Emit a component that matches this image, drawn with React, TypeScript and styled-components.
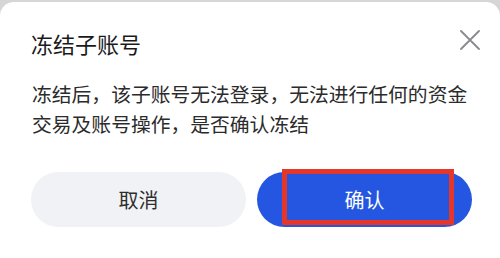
import React from "react";
import styled, { createGlobalStyle } from "styled-components";

const GlobalStyle = createGlobalStyle`
  html, body {
    margin: 0;
    padding: 0;
    background: #d6d6d8;
  }
  body {
    font-family: "Noto Sans CJK SC", "Noto Sans", sans-serif;
  }
`;

const FreezeDialog = () => {
  return (
    <Dialog>
      <Header>
        <Title>冻结子账号</Title>
        <CloseButton aria-label="关闭">
          <svg width="20" height="20" viewBox="0 0 20 20">
            <path d="M1 1 L19 19 M19 1 L1 19" stroke="#8a8a8e" strokeWidth="1.8" strokeLinecap="round" />
          </svg>
        </CloseButton>
      </Header>
      <Message>冻结后，该子账号无法登录，无法进行任何的资金交易及账号操作，是否确认冻结</Message>
      <Actions>
        <Button>取消</Button>
        <Button $primary>
          确认
          <Highlight />
        </Button>
      </Actions>
    </Dialog>
  );
};

export default function App() {
  return (
    <>
      <GlobalStyle />
      <Page>
        <FreezeDialog />
      </Page>
    </>
  );
}

const Page = styled.div`
  width: 500px;
  height: 258px;
  padding-top: 2px;
  box-sizing: border-box;
  overflow: hidden;
`;

const Dialog = styled.section`
  height: 256px;
  background: #ffffff;
  border-radius: 14px 14px 0 0;
  padding: 23px 28px 0 31px;
  box-sizing: border-box;
`;

const Header = styled.div`
  display: flex;
  align-items: center;
  justify-content: space-between;
  height: 22px;
`;

const Title = styled.h2`
  margin: 0;
  margin-top: 14px;
  font-size: 22px;
  font-weight: 400;
  color: #1a1a1a;
  line-height: 22px;
`;

const CloseButton = styled.button`
  display: flex;
  align-items: center;
  justify-content: center;
  padding: 0;
  margin-right: -10px;
  margin-top: 8px;
  width: 24px;
  height: 24px;
  border: none;
  background: none;
`;

const Message = styled.p`
  margin: 32px 0 0 1px;
  font-size: 19.8px;
  line-height: 30px;
  color: #2b2b2b;
`;

const Actions = styled.div`
  display: grid;
  grid-template-columns: 215px 215px;
  column-gap: 11px;
  margin-top: 33px;
`;

const Button = styled.button<{ $primary?: boolean }>`
  position: relative;
  height: 55px;
  border: none;
  border-radius: 28px;
  font-family: inherit;
  font-size: 20px;
  background: ${(p) => (p.$primary ? "#2456e2" : "#f1f2f6")};
  color: ${(p) => (p.$primary ? "#ffffff" : "#2e2e2e")};
`;

const Highlight = styled.span`
  position: absolute;
  left: 25px;
  top: -3px;
  width: 172px;
  height: 56px;
  border: 5px solid #e5362a;
  box-sizing: border-box;
`;
